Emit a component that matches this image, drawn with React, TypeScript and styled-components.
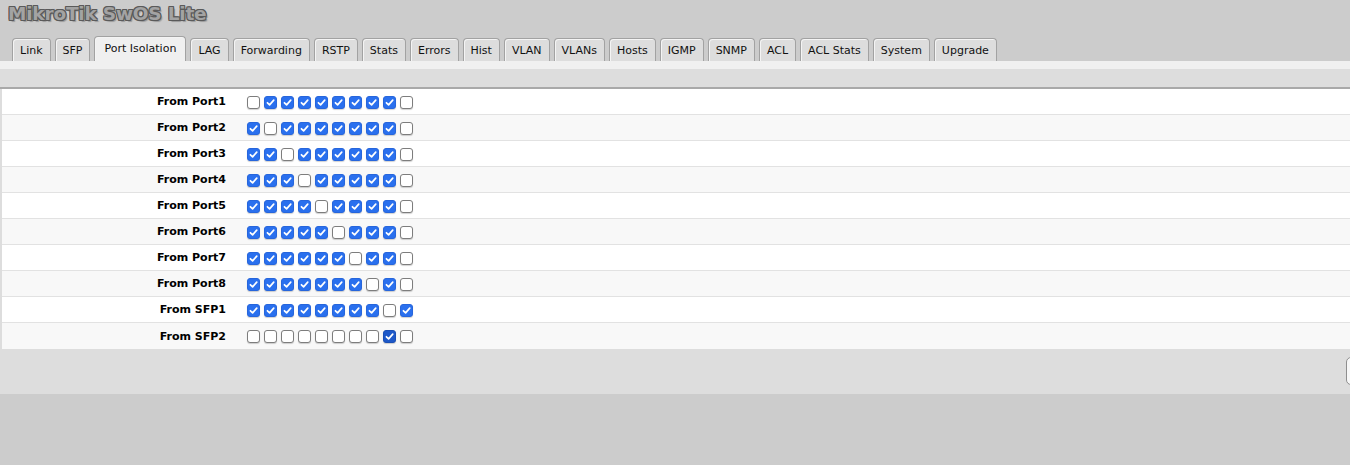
import React from "react";
import styled, { createGlobalStyle } from "styled-components";

const Global = createGlobalStyle`
  html, body { margin: 0; padding: 0; }
  body {
    background: #cccccc;
    font-family: "DejaVu Sans", Verdana, sans-serif;
    font-size: 11px;
    color: #000;
    overflow: hidden;
  }
`;

const Page = styled.div`
  width: 100%;
  overflow: hidden;
`;

const Header = styled.div`
  height: 36px;
  padding: 0 8px;
  box-sizing: border-box;
`;

const Title = styled.h1`
  margin: 0;
  padding-top: 3px;
  font-family: "DejaVu Sans", Verdana, sans-serif;
  font-weight: bold;
  font-size: 18.5px;
  line-height: 21px;
  color: #a3a3a3;
  letter-spacing: -0.2px;
  text-shadow:
    -1px 0 0 #5a5a5a, 1px 0 0 #5a5a5a, 0 -1px 0 #5a5a5a, 0 1px 0 #5a5a5a,
    -1px -1px 0 #5a5a5a, 1px 1px 0 #5a5a5a, -1px 1px 0 #5a5a5a, 1px -1px 0 #5a5a5a,
    2px 2px 1px #9a9a9a;
`;

const TabBar = styled.div`
  display: flex;
  align-items: flex-end;
  gap: 4px;
  padding-left: 12px;
  height: 25px;
`;

const Tab = styled.div<{ $active?: boolean }>`
  height: ${(p) => (p.$active ? "25px" : "23px")};
  padding: 0 ${(p) => (p.$active ? "9px" : "7px")};
  box-sizing: border-box;
  display: flex;
  align-items: center;
  justify-content: center;
  border: 1px solid #a2a2a2;
  border-bottom: none;
  border-radius: 4px 4px 0 0;
  background: ${(p) => (p.$active ? "#f0f0f0" : "#dddddd")};
  box-shadow: inset 1px 1px 0 #f4f4f4;
  color: #111;
  font-size: 11px;
  white-space: nowrap;
  cursor: default;
`;

const TabText = styled.span<{ $active?: boolean }>`
  position: relative;
  top: ${(p) => (p.$active ? "-1px" : "0")};
`;

const SubBarLight = styled.div`
  height: 8px;
  background: #f0f0f0;
`;

const SubBar = styled.div`
  height: 18px;
  background: #dddddd;
  border-bottom: 2px solid #a9a9a9;
`;

const Content = styled.div`
  background: #dddddd;
  padding-left: 2px;
`;

const Table = styled.div`
  display: flex;
  flex-direction: column;
  background: #fff;
`;

const Row = styled.div<{ $alt?: boolean }>`
  display: flex;
  align-items: center;
  height: 26px;
  box-sizing: border-box;
  background: ${(p) => (p.$alt ? "#f8f8f8" : "#ffffff")};
  border-bottom: 1px solid #e2e2e2;
  &:last-child { border-bottom: none; }
`;

const Label = styled.div`
  width: 230px;
  padding-right: 6px;
  box-sizing: border-box;
  text-align: right;
  font-weight: bold;
  font-size: 11px;
  white-space: nowrap;
`;

const Checks = styled.div`
  display: flex;
  gap: 4px;
  padding-left: 15px;
  padding-top: 1px;
`;

const Box = styled.span<{ $checked?: boolean; $focus?: boolean }>`
  width: 13px;
  height: 13px;
  box-sizing: border-box;
  border-radius: 3px;
  display: flex;
  align-items: center;
  justify-content: center;
  background: ${(p) => (p.$checked ? (p.$focus ? "#1d58c9" : "#2a70ee") : "#ffffff")};
  border: 1px solid ${(p) => (p.$checked ? (p.$focus ? "#1a4fb5" : "#2766dc") : "#7d7d7d")};
  box-shadow: 0 1px 1px rgba(0, 0, 0, 0.18);
`;

const Footer = styled.div`
  height: 45px;
  background: #dddddd;
  display: flex;
  justify-content: flex-end;
  align-items: flex-start;
  padding-top: 8px;
  box-sizing: border-box;
`;

const Button = styled.button`
  height: 28px;
  width: 60px;
  margin-right: -56px;
  border: 1px solid #8e8e8e;
  border-radius: 5px;
  background: #f7f7f7;
  font-family: "DejaVu Sans", Verdana, sans-serif;
  font-size: 11px;
`;

const Check = () => (
  <svg width="9" height="9" viewBox="0 0 10 10">
    <path d="M1.6 5.3 L4 7.6 L8.6 2.4" fill="none" stroke="#fff" strokeWidth="1.9" strokeLinecap="round" strokeLinejoin="round" />
  </svg>
);

const tabs = [
  "Link", "SFP", "Port Isolation", "LAG", "Forwarding", "RSTP", "Stats", "Errors",
  "Hist", "VLAN", "VLANs", "Hosts", "IGMP", "SNMP", "ACL", "ACL Stats", "System", "Upgrade",
];

const labels = [
  "From Port1", "From Port2", "From Port3", "From Port4", "From Port5",
  "From Port6", "From Port7", "From Port8", "From SFP1", "From SFP2",
];

const matrix: boolean[][] = labels.map((_, r) =>
  Array.from({ length: 10 }, (_, c) => {
    if (r < 8) return c !== r && c !== 9;
    if (r === 8) return c !== 8;
    return c === 8;
  })
);

export default function App() {
  return (
    <Page>
      <Global />
      <Header>
        <Title>MikroTik SwOS Lite</Title>
      </Header>
      <TabBar>
        {tabs.map((t) => (
          <Tab key={t} $active={t === "Port Isolation"}>
            <TabText $active={t === "Port Isolation"}>{t}</TabText>
          </Tab>
        ))}
      </TabBar>
      <SubBarLight />
      <SubBar />
      <Content>
        <Table>
          {labels.map((l, r) => (
            <Row key={l} $alt={r % 2 === 1}>
              <Label>{l}</Label>
              <Checks>
                {matrix[r].map((on, c) => (
                  <Box key={c} $checked={on} $focus={r === 9 && c === 8}>
                    {on && <Check />}
                  </Box>
                ))}
              </Checks>
            </Row>
          ))}
        </Table>
        <Footer>
          <Button aria-label="Apply" />
        </Footer>
      </Content>
    </Page>
  );
}
